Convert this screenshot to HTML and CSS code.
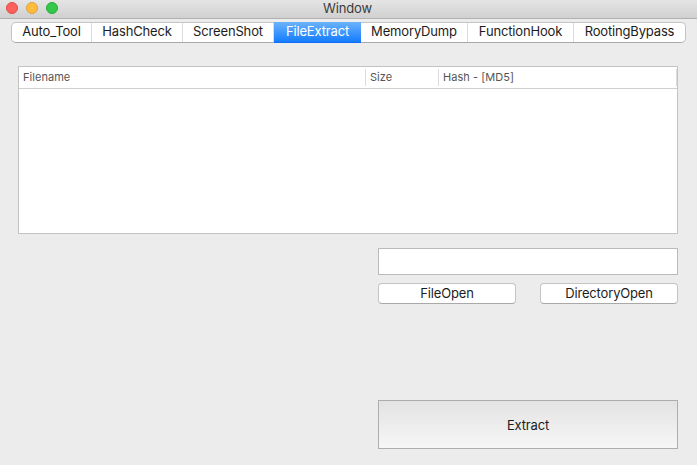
FILE: index.html
```html
<!DOCTYPE html>
<html lang="en">
<head>
<meta charset="utf-8">
<title>Window</title>
<link rel="stylesheet" href="styles.css">
</head>
<body>
<header class="titlebar">
  <div class="lights"><i class="light close"></i><i class="light minimize"></i><i class="light maximize"></i></div>
  <h1 class="title">Window</h1>
</header>
<nav class="tabs">
  <button class="tab">Auto_Tool</button>
  <button class="tab">HashCheck</button>
  <button class="tab">ScreenShot</button>
  <button class="tab active">FileExtract</button>
  <button class="tab">MemoryDump</button>
  <button class="tab">FunctionHook</button>
  <button class="tab">RootingBypass</button>
</nav>
<main class="content">
  <section class="table">
    <div class="table-head">
      <div class="col">Filename</div>
      <div class="col">Size</div>
      <div class="col">Hash - [MD5]</div>
    </div>
  </section>
  <section class="controls">
    <input class="path" type="text" aria-label="Path">
    <div class="open-row">
      <button class="push">FileOpen</button>
      <button class="push">DirectoryOpen</button>
    </div>
    <button class="extract">Extract</button>
  </section>
</main>
</body>
</html>
```
FILE: styles.css
```css
* { box-sizing: border-box; }
body {
  margin: 0;
  width: 697px;
  height: 465px;
  overflow: hidden;
  background: #ececec;
  color: #1c1c1c;
  font: 13px/16px Inter, Roboto, sans-serif;
  letter-spacing: -.16px;
}
button { margin: 0; padding: 0; font: inherit; letter-spacing: inherit; color: inherit; white-space: nowrap; }
.titlebar {
  display: grid;
  grid-template-columns: 64px 1fr 64px;
  height: 19px;
  background: linear-gradient(#e5e5e5, #d0d0d0);
  border-bottom: 1px solid #b0b0b0;
}
.lights { display: flex; gap: 8px; padding: 2px 0 0 6px; }
.light { width: 12px; height: 12px; border-radius: 50%; border: 1px solid; }
.close { background: #fc615d; border-color: #e24b47; }
.minimize { background: #fdbc40; border-color: #dfa137; }
.maximize { background: #34c84a; border-color: #27aa35; }
.title { margin: 0; padding-right: 2px; font-size: 13px; font-weight: 400; line-height: 17px; text-align: center; color: #3b3b3b; }
.tabs {
  display: grid;
  grid-template-columns: 80px 91px 91px 87px 107px 106px 111px;
  width: 675px;
  height: 21px;
  margin: 3px 0 0 11px;
  border: 1px solid #c4c4c4;
  border-bottom-color: #a9a9a9;
  border-radius: 5px;
  background: #fff;
}
.tab { border: 0; border-right: 1px solid #dcdcdc; background: none; line-height: 17px; height: 19px; padding-bottom: 2px; }
.tab:last-child { border-right: 0; }
.tab.active { height: 21px; margin-top: -1px; border: 0; background: linear-gradient(#6bb3fa, #147cff 95%, #0c62f5); color: #fff; }
.content { padding: 23px 19px 0 18px; }
.table { height: 168px; border: 1px solid #c3c3c3; background: #fff; }
.table-head {
  display: grid;
  grid-template-columns: 347px 73px 238px;
  height: 22px;
  padding: 2px 0;
  border-bottom: 1px solid #cfcfcf;
  font-size: 11px;
  line-height: 17px;
  color: #555;
}
.col { padding-left: 4px; border-right: 1px solid #dcdcdc; height: 17px; letter-spacing: .04px; }
.controls { width: 300px; margin: 14px 0 0 auto; }
.path { display: block; width: 100%; height: 27px; border: 1px solid #bababa; background: #fff; }
.open-row { display: flex; justify-content: space-between; margin-top: 8px; }
.push { width: 138px; height: 21px; border: 1px solid #c4c4c4; border-bottom-color: #a9a9a9; border-radius: 4px; background: #fff; line-height: 19px; }
.extract { display: block; width: 100%; height: 49px; margin-top: 96px; border: 1px solid #adadad; background: linear-gradient(#e3e3e3, #f6f6f6); }
```
